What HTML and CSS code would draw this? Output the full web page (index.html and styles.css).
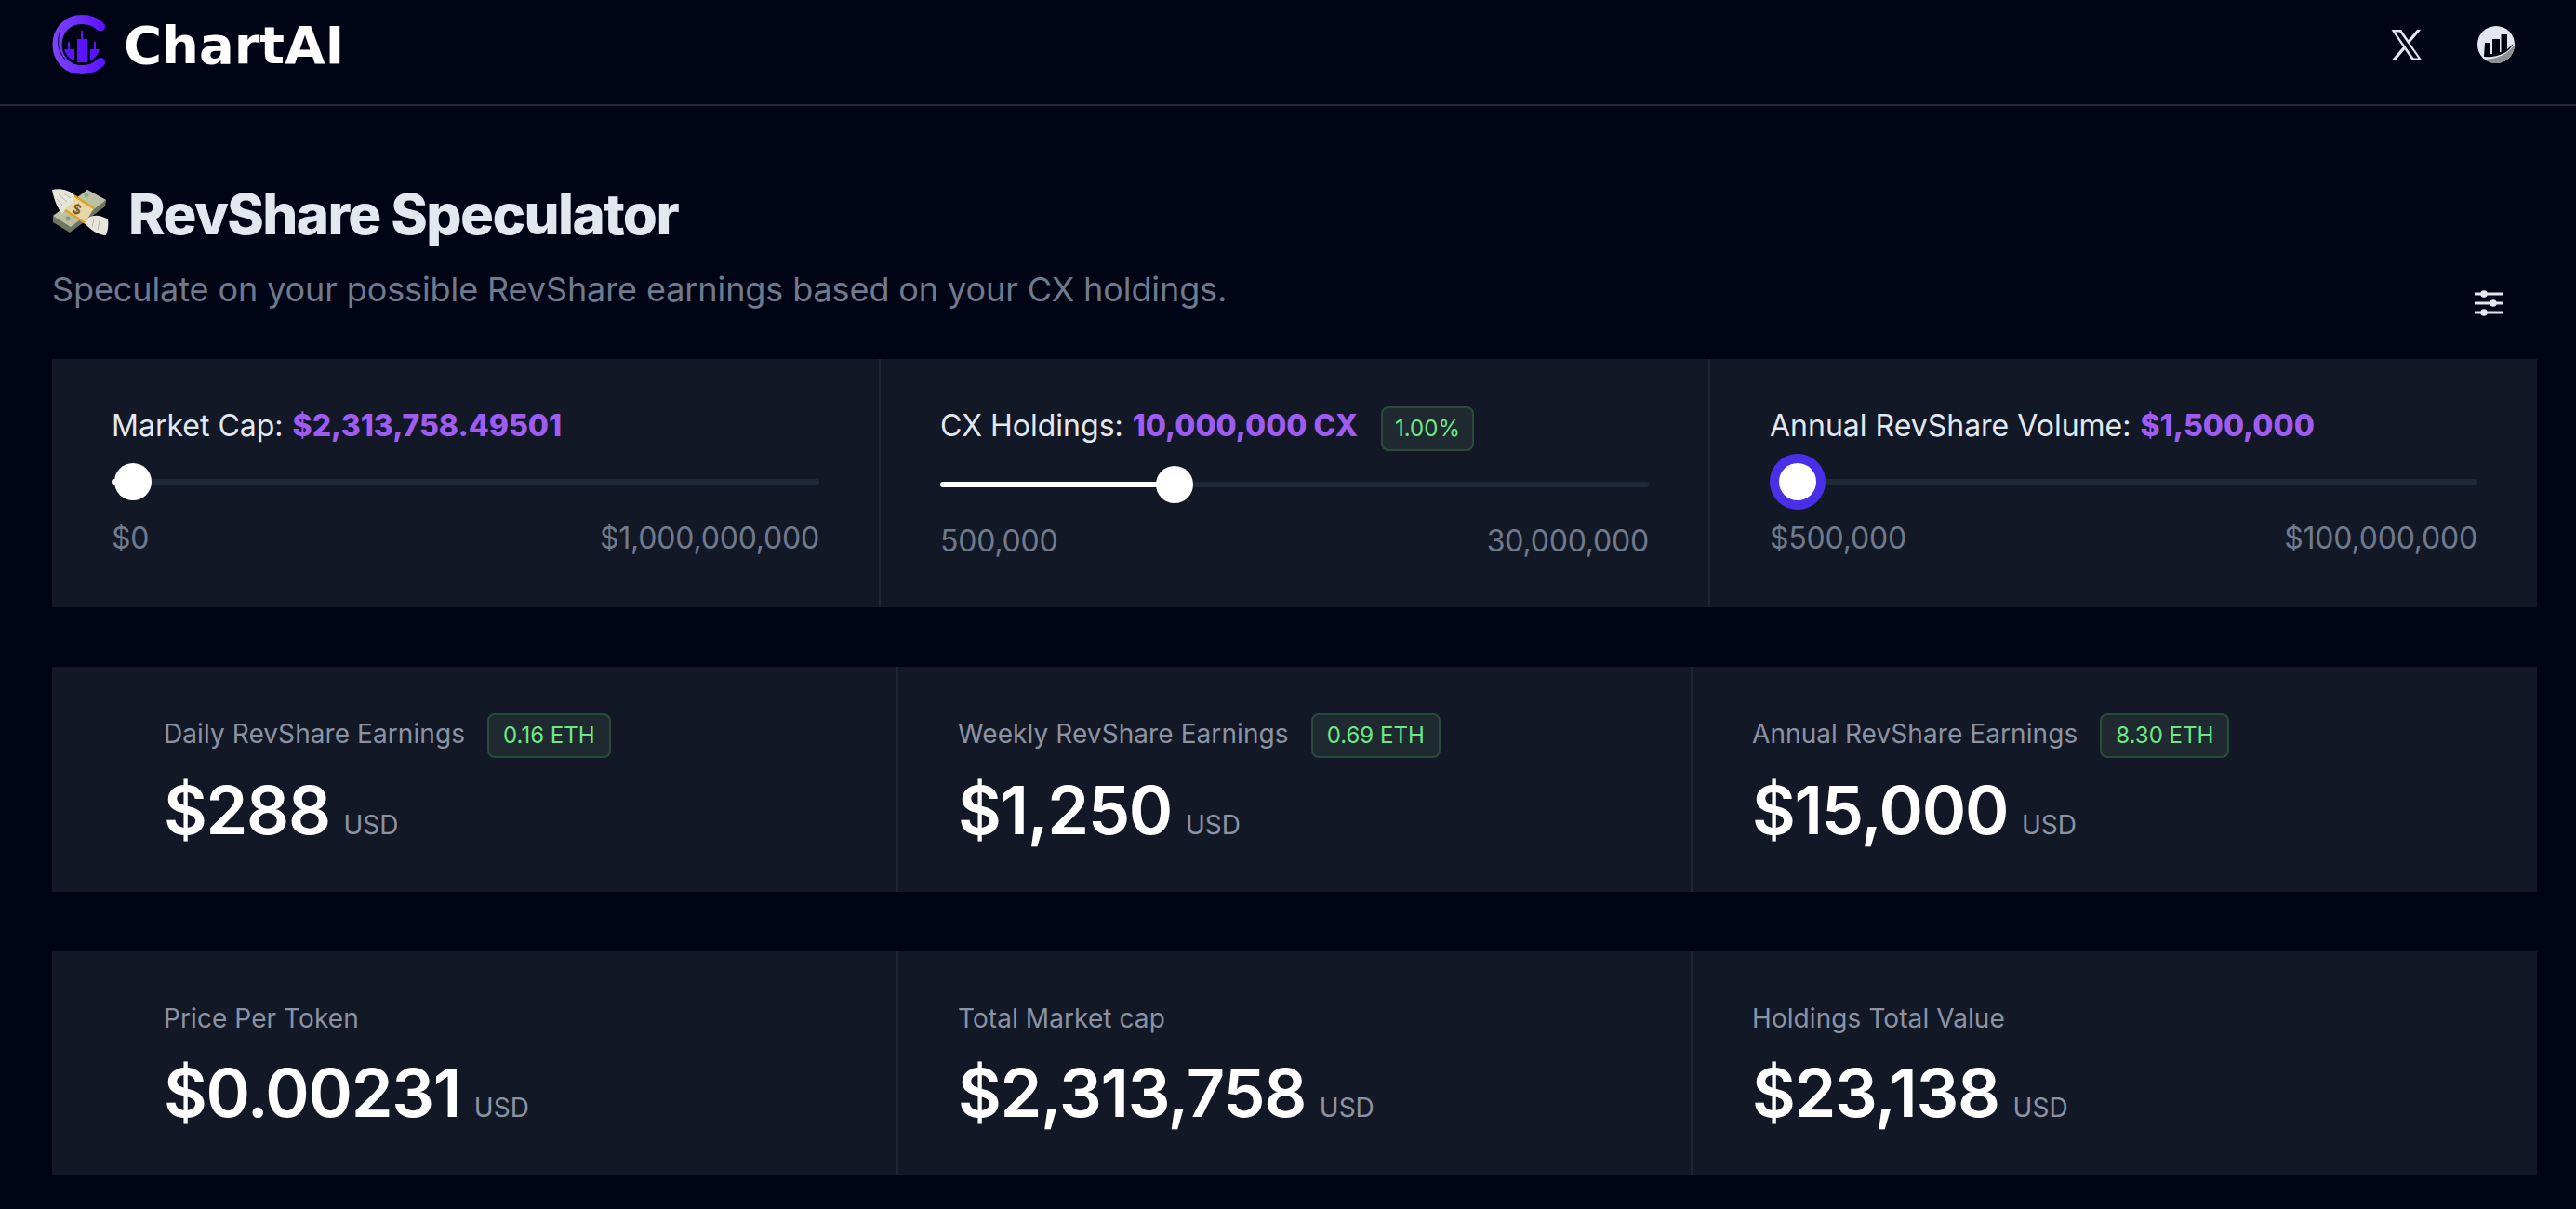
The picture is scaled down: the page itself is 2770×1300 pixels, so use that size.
FILE: index.html
```html
<!DOCTYPE html>
<html lang="en">
<head>
  <meta charset="UTF-8">
  <title>ChartAI - RevShare Speculator</title>
  <link rel="stylesheet" href="styles.css">
</head>
<body>
  <header class="topbar">
    <div class="brand">
      <svg class="brand-logo" viewBox="0 0 57 64">
        <defs>
          <linearGradient id="ring" gradientUnits="userSpaceOnUse" x1="0" y1="0" x2="57" y2="0">
            <stop offset="0" stop-color="#7e44f8"/>
            <stop offset="1" stop-color="#5a12ff"/>
          </linearGradient>
        </defs>
        <path fill="none" stroke="url(#ring)" stroke-width="10" stroke-linecap="round" d="M52 12.500 C47 7.500 40 5 32 5 C16 5 5.500 17 5.500 32 C5.500 47 16 59 32 59 C40 59 47 56.500 52 51"/>
        <path fill="none" stroke="#010415" stroke-width="1" d="M8 20 C5 30 7 40 14 48"/>
        <rect x="31" y="17" width="2" height="10" fill="#5a12ff"/>
        <rect x="27" y="26" width="11" height="25" fill="#5a12ff"/>
        <rect x="17" y="29" width="2" height="9" fill="#5a12ff"/>
        <path fill="#5a12ff" d="M13 37 H24 V49 C18 47 15 43 13 37 Z"/>
        <rect x="45" y="29" width="2" height="9" fill="#5a12ff"/>
        <path fill="#5a12ff" d="M41 37 H51 C49 43 46 47 41 49 Z"/>
      </svg>
      <span class="brand-name">ChartAI</span>
    </div>
    <nav class="topbar-links">
      <svg class="icon-x" viewBox="0 0 24 24"><path fill="#e2e8f0" fill-rule="evenodd" d="M0 0H7.700L13.200 8 20 0H23L14.400 10.100 24 24H16.300L10.400 15.400 3.200 24H0L9.100 13.400ZM3 1.800 17.400 22.200H21L6.600 1.800Z"/></svg>
      <svg class="icon-dex" viewBox="0 0 40 40">
        <circle cx="20" cy="20" r="20" fill="#e2e8f0"/>
        <path fill="#8f8f8f" d="M40 20 A20 20 0 0 1 8 36 C22 35 33 30 40 20Z"/>
        <path fill="#00030f" d="M8 18 H14 V30 H16 V14 H24 V28 H25.500 V9 H32 V25 L38.500 19 C34 29 22 34 7 33 Z"/>
      </svg>
    </nav>
  </header>

  <main class="content">
    <div class="page-head">
      <div>
        <h1 class="page-title">
          <svg class="title-emoji" viewBox="6 7 60 53">
            <path fill="#6f7563" d="M44 9 L64 20 L63 27 L25 55 L7 44 L7 38 Z"/>
            <path fill="#bcc1a4" d="M44 9 L64 20 L26 49 L7 37 Z"/>
            <path fill="#e6d6a8" d="M29 15 L51 29 L41 45 L19 31 Z"/>
            <path fill="none" stroke="#e0a415" stroke-width="2.500" d="M29 15 L51 29 M20 31 L42 45"/>
            <text class="emoji-dollar" x="28" y="35" transform="rotate(18 33 30)">$</text>
            <circle cx="43" cy="15" r="2.500" fill="#7fb98a"/>
            <circle cx="23" cy="40" r="2.500" fill="#8f977f"/>
            <path fill="#e6e6da" d="M6 9 C14 7 25 9 30 15 L28 23 L21 28 L17 35 C12 29 8 20 6 9 Z"/>
            <path fill="none" stroke="#a6a898" stroke-width="0.800" d="M13 14 L22 22 M11 19 L18 27 M18 12 L26 18"/>
            <path fill="#e6e6da" d="M45 39 C52 35 60 37 66 41 C67 47 66 53 64 58 C56 58 47 52 41 45 Z"/>
            <path fill="none" stroke="#a6a898" stroke-width="0.800" d="M51 41 L49 49 M57 42 L55 52"/>
          </svg>
          RevShare Speculator
        </h1>
        <p class="page-sub">Speculate on your possible RevShare earnings based on your CX holdings.</p>
      </div>
      <svg class="icon-sliders" viewBox="0 0 30 24">
        <path stroke="#e2e8f0" stroke-width="3" d="M0 2 H30 M0 12 H30 M0 22 H30"/>
        <circle cx="10" cy="2" r="3.800" fill="#e2e8f0"/>
        <circle cx="20" cy="12" r="3.800" fill="#e2e8f0"/>
        <circle cx="10" cy="22" r="3.800" fill="#e2e8f0"/>
      </svg>
    </div>

    <section class="panel sliders">
      <div class="slider-cell">
        <div class="slider-label">Market Cap: <b>$2,313,758.49501</b></div>
        <div class="track">
          <div class="track-fill" style="width:0.8%"></div>
          <div class="thumb" style="left:0.4%"></div>
        </div>
        <div class="range"><span>$0</span><span>$1,000,000,000</span></div>
      </div>
      <div class="slider-cell tall">
        <div class="slider-label">CX Holdings: <b>10,000,000 CX</b> <span class="badge">1.00%</span></div>
        <div class="track">
          <div class="track-fill" style="width:31%"></div>
          <div class="thumb" style="left:30.5%"></div>
        </div>
        <div class="range"><span>500,000</span><span>30,000,000</span></div>
      </div>
      <div class="slider-cell">
        <div class="slider-label">Annual RevShare Volume: <b>$1,500,000</b></div>
        <div class="track">
          <div class="thumb focused" style="left:1.3%"></div>
        </div>
        <div class="range"><span>$500,000</span><span>$100,000,000</span></div>
      </div>
    </section>

    <section class="panel stats with-badges">
      <div class="stat">
        <div class="stat-label">Daily RevShare Earnings <span class="badge">0.16 ETH</span></div>
        <div class="stat-value">$288 <small>USD</small></div>
      </div>
      <div class="stat">
        <div class="stat-label">Weekly RevShare Earnings <span class="badge">0.69 ETH</span></div>
        <div class="stat-value">$1,250 <small>USD</small></div>
      </div>
      <div class="stat">
        <div class="stat-label">Annual RevShare Earnings <span class="badge">8.30 ETH</span></div>
        <div class="stat-value">$15,000 <small>USD</small></div>
      </div>
    </section>

    <section class="panel stats">
      <div class="stat">
        <div class="stat-label">Price Per Token</div>
        <div class="stat-value">$0.00231 <small>USD</small></div>
      </div>
      <div class="stat">
        <div class="stat-label">Total Market cap</div>
        <div class="stat-value">$2,313,758 <small>USD</small></div>
      </div>
      <div class="stat">
        <div class="stat-label">Holdings Total Value</div>
        <div class="stat-value">$23,138 <small>USD</small></div>
      </div>
    </section>
  </main>
</body>
</html>
```

FILE: styles.css
```css
* {
  box-sizing: border-box;
}
html, body {
  height: 100%;
}
body {
  margin: 0;
  background: #010415;
  color: #e2e8f0;
  font-family: 'Inter', 'Liberation Sans', sans-serif;
  overflow: hidden;
}
.topbar {
  display: flex;
  align-items: center;
  justify-content: space-between;
  height: 114px;
  padding: 0 66px 16px 56px;
  border-bottom: 2px solid #1f2937;
}
.brand {
  display: flex;
  align-items: center;
  gap: 20px;
}
.brand-logo {
  width: 57px;
  height: 64px;
}
.brand-name {
  font-family: 'DejaVu Sans', sans-serif;
  font-size: 56px;
  font-weight: 700;
  color: #fff;
}
.topbar-links {
  display: flex;
  align-items: center;
  gap: 58px;
}
.icon-x {
  width: 36px;
  height: 33px;
}
.icon-dex {
  width: 40px;
  height: 40px;
}
.content {
  padding: 82px 42px 0 56px;
}
.page-head {
  display: flex;
  justify-content: space-between;
  align-items: flex-end;
  padding-bottom: 53px;
}
.page-title {
  display: flex;
  align-items: center;
  gap: 22px;
  margin: 0;
  font-size: 60px;
  line-height: 68px;
  font-weight: 800;
  letter-spacing: -1.6px;
  color: #e2e8f0;
}
.title-emoji {
  width: 60px;
  height: 53px;
  margin-top: -4px;
  overflow: visible;
}
.emoji-dollar {
  font-size: 14px;
  font-weight: 700;
  fill: #80551f;
  letter-spacing: 0;
}
.page-sub {
  margin: 25px 0 0;
  font-size: 36px;
  line-height: 44px;
  letter-spacing: -0.1px;
  color: #6f7a8c;
}
.icon-sliders {
  width: 30px;
  height: 24px;
  margin-right: 37px;
  margin-bottom: -5px;
  overflow: visible;
}
.panel {
  display: grid;
  background: #131827;
  margin-bottom: 64px;
}
.sliders {
  grid-template-columns: 889px 892px 1fr;
  height: 267px;
}
.slider-cell {
  padding: 50px 64px 0;
  border-left: 2px solid #1f2533;
}
.slider-cell:first-child {
  border-left: 0;
}
.slider-label {
  display: flex;
  align-items: flex-start;
  gap: 10px;
  height: 44px;
  line-height: 44px;
  font-size: 32px;
  color: #e2e8f0;
}
.slider-label b {
  color: #9f5cf0;
  font-weight: 800;
}
.badge {
  display: inline-block;
  padding: 0 15px;
  height: 48px;
  line-height: 44px;
  font-size: 24px;
  color: #6ee787;
  background: #1e2a30;
  border: 2px solid #2b4a3a;
  border-radius: 8px;
  font-weight: 400;
}
.slider-cell .badge {
  margin: 1px 0 0 15px;
  padding: 0 13px;
}
.track {
  position: relative;
  height: 6px;
  margin-top: 35px;
  background: #1f2937;
  border-radius: 3px;
}
.tall .track {
  margin-top: 38px;
}
.track-fill {
  height: 100%;
  background: #fff;
  border-radius: 3px;
}
.thumb {
  position: absolute;
  top: -17px;
  width: 40px;
  height: 40px;
  background: #fff;
  border-radius: 50%;
}
.thumb.focused {
  box-shadow: 0 0 0 10px #4a2fe8;
}
.range {
  display: flex;
  justify-content: space-between;
  margin-top: 38px;
  font-size: 32px;
  letter-spacing: -0.2px;
  color: #6f7a8c;
}
.stats {
  grid-template-columns: 908px 854px 1fr;
  height: 240px;
}
.stats.with-badges {
  height: 242px;
}
.stat {
  padding: 50px 40px 0 64px;
  border-left: 2px solid #1f2533;
}
.stat:first-child {
  padding-left: 120px;
  border-left: 0;
}
.stat-label {
  display: flex;
  align-items: flex-start;
  gap: 24px;
  height: 44px;
  line-height: 44px;
  font-size: 28px;
  letter-spacing: 0.08px;
  color: #8b93a3;
}
.stat-label .badge {
  letter-spacing: 0;
}
.stat-value {
  margin-top: 16px;
  font-size: 72px;
  line-height: 84px;
  font-weight: 600;
  letter-spacing: -1.3px;
  color: #fff;
}
.with-badges .stat-value {
  margin-top: 18px;
}
.stat-value small {
  margin-left: -2px;
  font-size: 28px;
  font-weight: 400;
  letter-spacing: 0;
  color: #8b93a3;
}
```
